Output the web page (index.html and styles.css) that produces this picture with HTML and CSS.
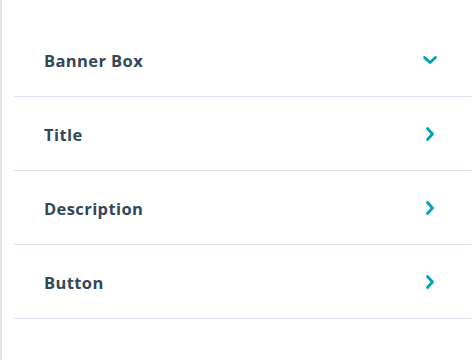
FILE: index.html
```html
<!DOCTYPE html>
<html lang="en">
<head>
    <meta charset="UTF-8">
    <meta name="viewport" content="width=device-width, initial-scale=1.0">
    <title>Module Fields</title>
    <link rel="stylesheet" href="styles.css">
</head>
<body>
    <div class="panel">
        <div class="field-group open">
            <span class="field-label">Banner Box</span>
            <svg class="caret" width="16" height="16" viewBox="0 0 16 16">
                <path d="M2.5 5.5 L8 10.5 L13.5 5.5" fill="none" stroke="#00a0b8" stroke-width="2.8" stroke-linecap="round" stroke-linejoin="round"/>
            </svg>
        </div>
        <div class="field-group">
            <span class="field-label">Title</span>
            <svg class="caret" width="16" height="16" viewBox="0 0 16 16">
                <path d="M5.5 2.5 L10.5 8 L5.5 13.5" fill="none" stroke="#00a0b8" stroke-width="2.8" stroke-linecap="round" stroke-linejoin="round"/>
            </svg>
        </div>
        <div class="field-group">
            <span class="field-label">Description</span>
            <svg class="caret" width="16" height="16" viewBox="0 0 16 16">
                <path d="M5.5 2.5 L10.5 8 L5.5 13.5" fill="none" stroke="#00a0b8" stroke-width="2.8" stroke-linecap="round" stroke-linejoin="round"/>
            </svg>
        </div>
        <div class="field-group">
            <span class="field-label">Button</span>
            <svg class="caret" width="16" height="16" viewBox="0 0 16 16">
                <path d="M5.5 2.5 L10.5 8 L5.5 13.5" fill="none" stroke="#00a0b8" stroke-width="2.8" stroke-linecap="round" stroke-linejoin="round"/>
            </svg>
        </div>
    </div>
</body>
</html>
```

FILE: styles.css
```css
body {
    font-family: "Open Sans", Lato, sans-serif;
    background-color: #ffffff;
    margin: 0;
    padding: 0;
}
.panel {
    box-sizing: border-box;
    height: 360px;
    width: 475px;
    border-left: 2px solid #e2e6ea;
    padding: 23px 3px 0 12px;
}
.field-group {
    display: flex;
    align-items: center;
    justify-content: space-between;
    border-bottom: 1px solid #dae3ef;
    padding: 1px 34px 0 30px;
    box-sizing: border-box;
    height: 74px;
}
.field-label {
    color: #33475b;
    font-size: 16.5px;
    font-weight: bold;
    letter-spacing: 0.4px;
}
.caret {
    display: block;
}
```
